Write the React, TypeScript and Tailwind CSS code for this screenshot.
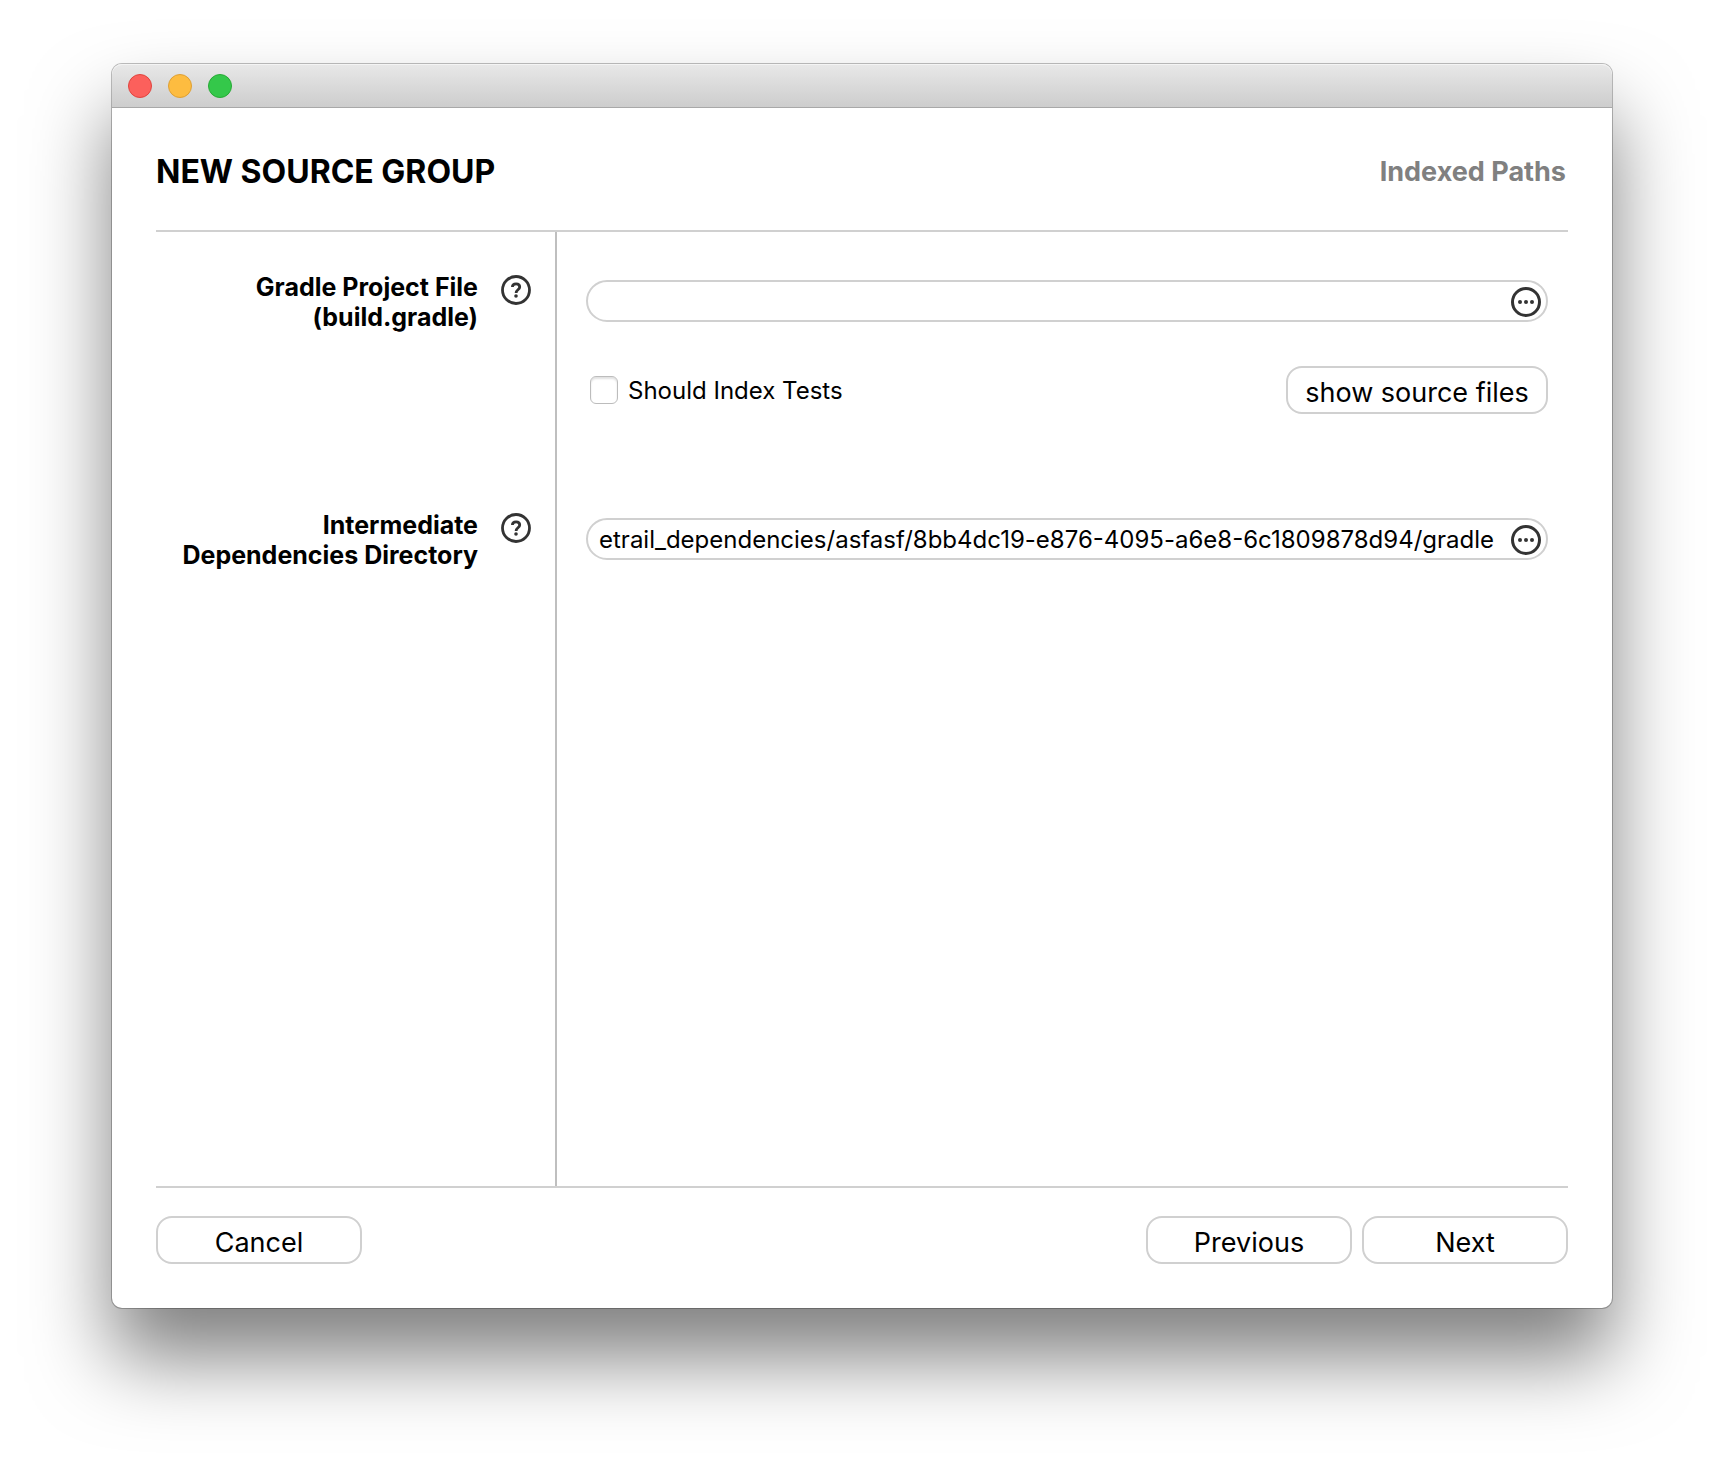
import { useState } from "react";
import type { ReactNode } from "react";

function HelpIcon() {
  return (
    <svg viewBox="0 0 30 30" className="size-[30px]" fill="none" stroke="#333" aria-hidden="true">
      <circle cx="15" cy="15" r="13.5" strokeWidth="2.8" />
      <path d="M11.4 12c0-2 1.5-3.2 3.7-3.2s3.6 1.2 3.6 3.1c0 2.8-3.6 2.9-3.6 6" strokeWidth="2.8" />
      <circle cx="15" cy="21" r="1.8" fill="#333" stroke="none" />
    </svg>
  );
}

function MoreIcon() {
  return (
    <svg viewBox="0 0 30 30" className="size-[30px]" fill="#333" aria-hidden="true">
      <circle cx="15" cy="15" r="13.5" fill="none" stroke="#333" strokeWidth="3" />
      <circle cx="9" cy="15" r="2" />
      <circle cx="15" cy="15" r="2" />
      <circle cx="21" cy="15" r="2" />
    </svg>
  );
}

function PushButton({ children, className = "w-[206px]" }: { children: ReactNode; className?: string }) {
  return (
    <button
      type="button"
      className={`h-12 rounded-2xl border-2 border-[#d0d0d0] bg-white pt-[6px] text-[27px] leading-[38px] text-black ${className}`}
    >
      {children}
    </button>
  );
}

function FieldLabel({ htmlFor, children }: { htmlFor: string; children: ReactNode }) {
  return (
    <div className="flex items-start justify-end gap-[23px] border-r-2 border-[#bfbfbf] pt-10 pr-6">
      <label htmlFor={htmlFor} className="text-right text-[25px] leading-[30px] font-bold">
        {children}
      </label>
      <button type="button" aria-label="Help" className="mt-[3px]">
        <HelpIcon />
      </button>
    </div>
  );
}

function PathField({ id, initial }: { id: string; initial: string }) {
  const [value, setValue] = useState(initial);
  return (
    <div className="flex h-[42px] items-center rounded-full border-2 border-[#d0d0d0] pt-[2px] pr-[5px] pl-[11px]">
      <input
        id={id}
        type="text"
        value={value}
        onChange={(e) => setValue(e.target.value)}
        className="min-w-0 flex-1 bg-transparent text-2xl leading-8 outline-none"
      />
      <button type="button" aria-label="Choose path">
        <MoreIcon />
      </button>
    </div>
  );
}

export default function App() {
  return (
    <div className="flex min-h-screen bg-white px-28 pt-16 pb-40 font-['Inter',sans-serif] text-black">
      <div className="flex flex-1 flex-col rounded-[10px] bg-white shadow-[0_0_0_1px_rgba(0,0,0,0.25),0_50px_80px_rgba(0,0,0,0.5)]">
        <div className="flex h-11 items-center gap-4 rounded-t-[10px] border-b border-[#a8a8a8] bg-linear-to-b from-[#e8e8e8] to-[#cdcdcd] px-4 shadow-[inset_0_1px_0_#f4f4f4]">
          <button type="button" aria-label="Close" className="size-6 rounded-full border border-[#e0443e] bg-[#fc605c]" />
          <button type="button" aria-label="Minimize" className="size-6 rounded-full border border-[#dea034] bg-[#fdbc40]" />
          <button type="button" aria-label="Zoom" className="size-6 rounded-full border border-[#27aa35] bg-[#34c84a]" />
        </div>

        <main className="flex flex-1 flex-col px-11 pb-11">
          <header className="flex h-[124px] items-center justify-between border-b-2 border-[#d0d0d0] pt-[6px] pr-[2px]">
            <h1 className="text-[32px] leading-10 font-bold">NEW SOURCE GROUP</h1>
            <h2 className="text-[27px] leading-10 font-bold text-[#808080]">Indexed Paths</h2>
          </header>

          <form className="grid flex-1 grid-cols-[401px_1fr] grid-rows-[auto_1fr]">
            <FieldLabel htmlFor="project-file">
              Gradle Project File
              <br />
              (build.gradle)
            </FieldLabel>
            <div className="pt-12 pr-5 pb-14 pl-[29px]">
              <PathField id="project-file" initial="" />
              <div className="mt-11 flex items-center justify-between pl-1">
                <label className="flex items-center gap-[10px] text-2xl leading-8">
                  <input
                    type="checkbox"
                    className="size-7 appearance-none rounded-md border border-[#bcbcbc] bg-white shadow-[inset_0_2px_2px_rgba(0,0,0,0.12)] checked:bg-[#3b99fc]"
                  />
                  <span className="pt-[2px]">Should Index Tests</span>
                </label>
                <PushButton className="w-[262px]">show source files</PushButton>
              </div>
            </div>

            <FieldLabel htmlFor="dependencies-directory">
              Intermediate
              <br />
              Dependencies Directory
            </FieldLabel>
            <div className="pt-12 pr-5 pl-[29px]">
              <PathField
                id="dependencies-directory"
                initial="etrail_dependencies/asfasf/8bb4dc19-e876-4095-a6e8-6c1809878d94/gradle"
              />
            </div>
          </form>

          <footer className="flex justify-between border-t-2 border-[#d0d0d0] pt-7">
            <PushButton>Cancel</PushButton>
            <div className="flex gap-[10px]">
              <PushButton>Previous</PushButton>
              <PushButton>Next</PushButton>
            </div>
          </footer>
        </main>
      </div>
    </div>
  );
}
